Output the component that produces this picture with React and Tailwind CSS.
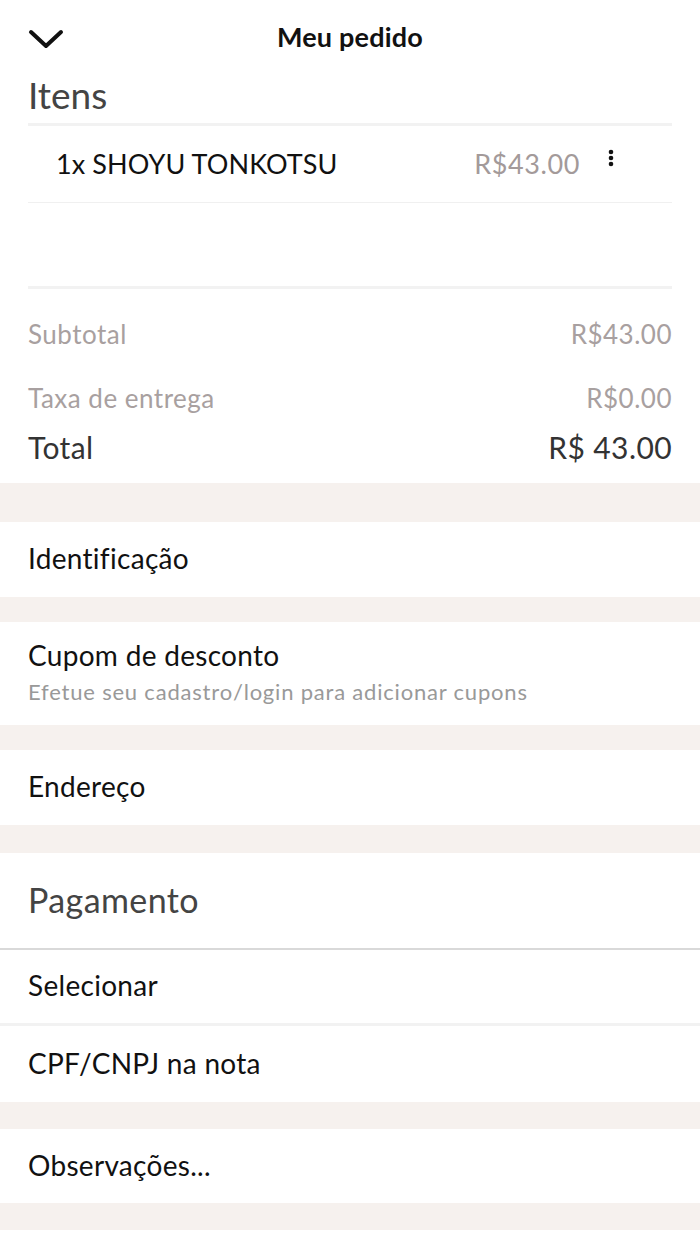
const font = { fontFamily: '"Lato", "Noto Sans", sans-serif' };

function Band({ h }) {
    return <div className={`bg-[#f6f1ee] ${h}`} />;
}

function Row({ children, h = 'h-[75px]' }) {
    return (
        <div className={`${h} bg-white px-7 pb-[3px] flex items-center text-[28px] tracking-[0.3px] text-[#111]`}>
            {children}
        </div>
    );
}

export default function App() {
    return (
        <div className="w-[700px] min-h-[1244px] bg-white" style={font}>
            {/* Cabeçalho */}
            <div className="h-[74px] relative flex items-center justify-center">
                <svg className="absolute left-[28px] top-[28px]" width="36" height="22" viewBox="0 0 36 22" fill="none">
                    <path d="M3 4 L18 18 L33 4" stroke="#111" strokeWidth="4" strokeLinecap="round" strokeLinejoin="round" />
                </svg>
                <h1 className="text-[27px] font-bold text-[#111] tracking-[0.2px]">Meu pedido</h1>
            </div>

            {/* Itens */}
            <div className="px-7">
                <div className="text-[37px] text-[#444] leading-none h-[49px] pt-[2px]">Itens</div>
                <div className="h-[3px] bg-[#f2f2f2]" />
                <div className="h-[76px] flex items-center pl-7">
                    <span className="flex-1 text-[27px] text-[#111] tracking-[0.1px]">1x SHOYU TONKOTSU</span>
                    <span className="text-[27px] text-[#a39a9a] tracking-[0.6px]">R$43.00</span>
                    <span className="ml-[28px] mr-[58px] -mt-3 flex">
                        <svg width="6" height="18" viewBox="0 0 6 18">
                            <circle cx="3" cy="3" r="2.3" fill="#111" />
                            <circle cx="3" cy="9" r="2.3" fill="#111" />
                            <circle cx="3" cy="15" r="2.3" fill="#111" />
                        </svg>
                    </span>
                </div>
                <div className="h-[1px] bg-[#f0f0f0]" />
                <div className="h-[83px]" />
                <div className="h-[3px] bg-[#f2f2f2]" />

                {/* Resumo */}
                <div className="pt-[26px] text-[#a8a0a0] text-[26px] tracking-[0.5px]">
                    <div className="flex justify-between h-[64px]">
                        <span>Subtotal</span>
                        <span>R$43.00</span>
                    </div>
                    <div className="flex justify-between h-[46px]">
                        <span>Taxa de entrega</span>
                        <span>R$0.00</span>
                    </div>
                    <div className="flex justify-between h-[58px] text-[30px] text-[#333] tracking-[0.4px]">
                        <span>Total</span>
                        <span>R$ 43.00</span>
                    </div>
                </div>
            </div>

            <Band h="h-[39px]" />
            <Row>Identificação</Row>
            <Band h="h-[25px]" />
            <div className="h-[103px] bg-white px-7 pb-[2px] flex flex-col justify-center">
                <div className="text-[28px] tracking-[0.3px] text-[#111] leading-tight">Cupom de desconto</div>
                <div className="text-[22px] tracking-[0.8px] text-[#999] mt-[2px]">Efetue seu cadastro/login para adicionar cupons</div>
            </div>
            <Band h="h-[25px]" />
            <Row>Endereço</Row>
            <Band h="h-[28px]" />
            <div className="h-[95px] bg-white px-7 pb-[3px] flex items-center text-[34px] tracking-[0.4px] text-[#444]">Pagamento</div>
            <div className="h-[2px] bg-[#d9d9d9]" />
            <Row h="h-[73px]">Selecionar</Row>
            <div className="h-[3px] bg-[#f2f2f2]" />
            <Row h="h-[76px]">CPF/CNPJ na nota</Row>
            <Band h="h-[27px]" />
            <Row h="h-[74px]">Observações...</Row>
            <Band h="h-[27px]" />
        </div>
    );
}
